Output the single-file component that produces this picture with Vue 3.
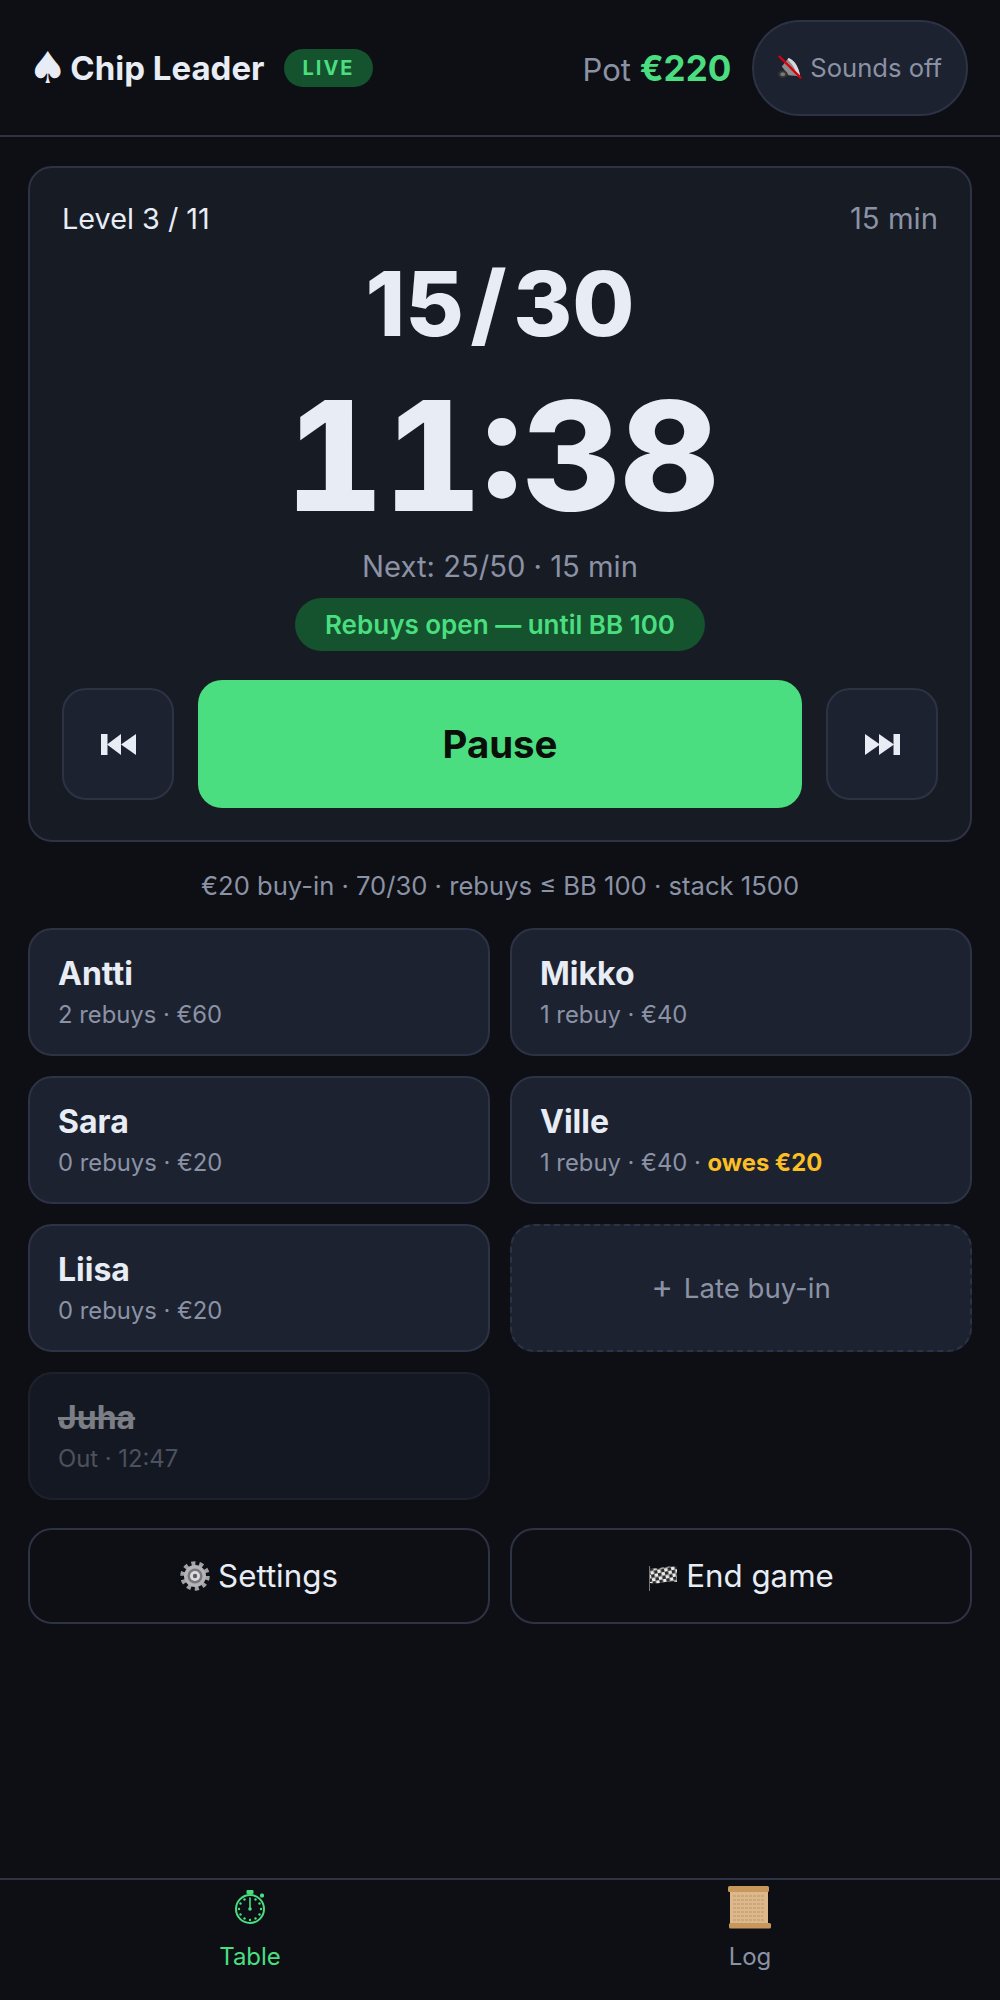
<script setup>
const players = [
  { name: "Antti", sub: "2 rebuys · €60" },
  { name: "Mikko", sub: "1 rebuy · €40" },
  { name: "Sara", sub: "0 rebuys · €20" },
  { name: "Ville", sub: "1 rebuy · €40 · ", owes: "owes €20" },
  { name: "Liisa", sub: "0 rebuys · €20" },
];

// stopwatch dial dots
const dots = [];
for (let i = 0; i < 12; i++) {
  if (i === 0) continue;
  const a = (i * Math.PI) / 6;
  dots.push({ x: 16 + 11 * Math.sin(a), y: 19 - 11 * Math.cos(a) });
}
</script>

<template>
  <div class="page">
    <header class="top">
      <div class="brand">
        <h1><span class="spade">♠</span> Chip Leader</h1>
        <span class="live">LIVE</span>
      </div>
      <div class="top-right">
        <span class="pot">Pot <b>€220</b></span>
        <button class="sound">
          <svg class="mute" viewBox="0 0 26 26" width="25" height="25">
            <path d="M5 12 L12 3 C18 5 23 13 24 22 L12 21 Z" fill="#8d8d8d" />
            <path d="M12 3 C18 5 23 13 24 22 L21 22 C19 14 15 8 11 5 Z" fill="#d9d9d9" />
            <ellipse cx="6" cy="20" rx="5" ry="4" fill="#333" />
            <ellipse cx="6" cy="20" rx="2.5" ry="2" fill="#777" />
            <path d="M2 1 L25 24" stroke="#d9000d" stroke-width="2.4" />
          </svg>
          Sounds off
        </button>
      </div>
    </header>

    <main class="content">
      <section class="clock">
        <div class="clock-head">
          <span class="level">Level 3 / 11</span>
          <span class="mins">15 min</span>
        </div>
        <div class="blinds">15 / 30</div>
        <div class="time">11:38</div>
        <div class="next">Next: 25/50 · 15 min</div>
        <div class="rebuys"><span>Rebuys open — until BB 100</span></div>
        <div class="controls">
          <button class="skip">
            <svg viewBox="0 0 35 21" width="35" height="21" fill="#e8ecf4">
              <rect x="0" y="0" width="6.5" height="21" />
              <path d="M6 10.5 L20 0 V21 Z" />
              <path d="M20 10.5 L35 0 V21 Z" />
            </svg>
          </button>
          <button class="pause">Pause</button>
          <button class="skip">
            <svg viewBox="0 0 35 21" width="35" height="21" fill="#e8ecf4">
              <path d="M0 0 L15 10.5 L0 21 Z" />
              <path d="M14 0 L29 10.5 L14 21 Z" />
              <rect x="28.5" y="0" width="6.5" height="21" />
            </svg>
          </button>
        </div>
      </section>

      <p class="rules">€20 buy-in · 70/30 · rebuys ≤ BB 100 · stack 1500</p>

      <div class="grid">
        <div v-for="p in players" :key="p.name" class="player">
          <div class="name">{{ p.name }}</div>
          <div class="sub">{{ p.sub }}<b v-if="p.owes" class="owes">{{ p.owes }}</b></div>
        </div>
        <button class="late"><span class="plus">+</span> Late buy-in</button>
        <div class="player out">
          <div class="name">Juha</div>
          <div class="sub">Out · 12:47</div>
        </div>
      </div>

      <div class="actions">
        <button class="action">
          <svg viewBox="0 0 30 30" width="30" height="30">
            <circle cx="15" cy="15" r="12.5" fill="none" stroke="#a2a2a6" stroke-width="4.5" stroke-dasharray="4 3.85" />
            <circle cx="15" cy="15" r="11" fill="#b4b4b8" />
            <circle cx="15" cy="15" r="7.5" fill="#77777c" />
            <circle cx="15" cy="15" r="5" fill="#dcdcde" />
            <circle cx="15" cy="15" r="2.2" fill="#5c5c62" />
          </svg>
          Settings
        </button>
        <button class="action">
          <svg viewBox="0 0 30 30" width="30" height="30">
            <defs>
              <pattern id="checks" width="7" height="7" patternUnits="userSpaceOnUse" patternTransform="rotate(-12)">
                <rect width="7" height="7" fill="#ececec" />
                <rect width="3.5" height="3.5" fill="#2c2c2c" />
                <rect x="3.5" y="3.5" width="3.5" height="3.5" fill="#2c2c2c" />
              </pattern>
            </defs>
            <path d="M2 7 C10 9 19 4 29 6 L29 21 C19 19 10 24 2 22 Z" fill="url(#checks)" />
            <path d="M1.5 5 V30" stroke="#777" stroke-width="1" />
          </svg>
          End game
        </button>
      </div>
    </main>

    <nav class="tabs">
      <div class="tab active">
        <div class="tab-icon">
          <svg viewBox="0 0 32 34" width="32" height="34">
            <rect x="12.5" y="0" width="7" height="4" rx="1" fill="#4ade80" />
            <rect x="26" y="3.5" width="4" height="4" rx="1.5" fill="#4ade80" />
            <circle cx="16" cy="19" r="14" fill="none" stroke="#4ade80" stroke-width="2" />
            <circle v-for="(d, i) in dots" :key="i" :cx="d.x" :cy="d.y" r="1.2" fill="#4ade80" />
            <path d="M16 7.5 V19" stroke="#4ade80" stroke-width="1.6" />
            <circle cx="16" cy="19" r="1.8" fill="#4ade80" />
          </svg>
        </div>
        <span>Table</span>
      </div>
      <div class="tab">
        <div class="tab-icon">
          <svg viewBox="0 0 44 44" width="44" height="44">
            <rect x="2" y="3" width="38" height="38" fill="#dcb88a" />
            <path d="M5 11 H37 M5 15 H36 M5 19 H37 M5 23 H36 M5 27 H37 M5 31 H35 M5 35 H37" stroke="#b99670" stroke-width="1" stroke-dasharray="3 1" />
            <rect x="0" y="1" width="41" height="6" rx="1.5" fill="#c8975c" />
            <rect x="1" y="38" width="42" height="5.5" rx="1.5" fill="#c8975c" />
          </svg>
        </div>
        <span>Log</span>
      </div>
    </nav>
  </div>
</template>

<style scoped>
.page {
  height: 2000px;
  display: flex;
  flex-direction: column;
  background: #0d0f14;
  color: #e8ecf4;
  font-family: Inter, "Liberation Sans", sans-serif;
}

button {
  font-family: inherit;
  cursor: pointer;
}

.top {
  height: 137px;
  box-sizing: border-box;
  border-bottom: 2px solid #2d3344;
  padding: 0 32px;
  display: flex;
  align-items: center;
  justify-content: space-between;
}

.brand {
  display: flex;
  align-items: center;
  gap: 20px;
}

.brand h1 {
  margin: 0;
  font-size: 33px;
  font-weight: 700;
}

.spade {
  font-family: "DejaVu Sans", sans-serif;
  font-size: 44px;
  font-weight: 400;
  line-height: 0;
  vertical-align: -3px;
  margin-left: -4px;
  margin-right: -5px;
}

.live {
  background: #14532d;
  color: #4ade80;
  font-size: 20px;
  font-weight: 700;
  letter-spacing: 2px;
  padding: 7px 18px;
  border-radius: 20px;
}

.top-right {
  display: flex;
  align-items: center;
  gap: 21px;
}

.pot {
  font-size: 31px;
  color: #8b92a5;
}

.pot b {
  color: #4ade80;
  font-weight: 700;
  font-size: 35px;
}

.sound {
  height: 96px;
  padding: 0 24px 0 23px;
  background: #1c2230;
  border: 2px solid #2d3344;
  border-radius: 48px;
  color: #8b92a5;
  font-size: 25.6px;
  display: flex;
  align-items: center;
  gap: 8px;
}

.content {
  flex: 1;
  padding: 29px 28px 0;
}

.clock {
  background: #171b24;
  border: 2px solid #2d3344;
  border-radius: 24px;
  padding: 32px;
}

.clock-head {
  display: flex;
  justify-content: space-between;
  font-size: 28.8px;
  margin-top: 1px;
}

.mins {
  color: #8b92a5;
  font-size: 29.3px;
}

.blinds {
  text-align: center;
  font-size: 90px;
  font-weight: 800;
  line-height: 96px;
  margin-top: 20px;
  word-spacing: -13px;
}

.time {
  text-align: center;
  font-size: 152px;
  font-weight: 800;
  font-variant-numeric: tabular-nums;
  line-height: 176px;
  margin-top: 15.5px;
  padding-left: 4px;
}

.next {
  text-align: center;
  font-size: 29.2px;
  color: #8b92a5;
  margin-top: 5px;
}

.rebuys {
  text-align: center;
  margin-top: 14.8px;
}

.rebuys span {
  display: inline-block;
  background: #14532d;
  color: #4ade80;
  font-size: 26px;
  font-weight: 600;
  padding: 11px 30px;
  border-radius: 28px;
}

.controls {
  display: flex;
  align-items: center;
  gap: 24px;
  margin-top: 29px;
}

.skip {
  width: 112px;
  height: 112px;
  background: #1c2230;
  border: 2px solid #2d3344;
  border-radius: 24px;
  display: flex;
  align-items: center;
  justify-content: center;
  padding: 0;
  flex-shrink: 0;
}

.pause {
  flex: 1;
  height: 128px;
  background: #4ade80;
  color: #0a0f0a;
  border: none;
  border-radius: 24px;
  font-size: 38.4px;
  font-weight: 700;
}

.rules {
  margin: 28px 0 27px;
  text-align: center;
  font-size: 25.6px;
  color: #8b92a5;
}

.grid {
  display: grid;
  grid-template-columns: 1fr 1fr;
  gap: 20px;
}

.player,
.late {
  height: 128px;
  box-sizing: border-box;
  background: #1c2230;
  border: 2px solid #2d3344;
  border-radius: 24px;
}

.player {
  padding: 24px 28px;
}

.name {
  font-size: 32px;
  font-weight: 700;
}

.sub {
  font-size: 23.8px;
  color: #8b92a5;
  margin-top: 7px;
}

.owes {
  color: #fbbf24;
  font-weight: 700;
}

.late {
  border-style: dashed;
  color: #8b92a5;
  font-size: 27.6px;
}

.plus {
  font-size: 33px;
  line-height: 0;
  margin-right: 3px;
}

.out {
  opacity: 0.5;
}

.out .name {
  text-decoration: line-through;
}

.actions {
  display: grid;
  grid-template-columns: 1fr 1fr;
  gap: 20px;
  margin-top: 28px;
}

.action {
  height: 96px;
  background: transparent;
  border: 2px solid #2d3344;
  border-radius: 24px;
  color: #e8ecf4;
  font-size: 31.3px;
  display: flex;
  align-items: center;
  justify-content: center;
  gap: 8px;
}

.tabs {
  height: 122px;
  box-sizing: border-box;
  border-top: 2px solid #2d3344;
  display: grid;
  grid-template-columns: 1fr 1fr;
}

.tab {
  display: flex;
  flex-direction: column;
  align-items: center;
  color: #8b92a5;
  font-size: 24px;
  padding-top: 5px;
  gap: 13px;
}

.tab-icon {
  height: 44px;
  display: flex;
  align-items: center;
}

.tab.active {
  color: #4ade80;
}
</style>

<style>
html,
body {
  background: #0d0f14;
}
</style>
